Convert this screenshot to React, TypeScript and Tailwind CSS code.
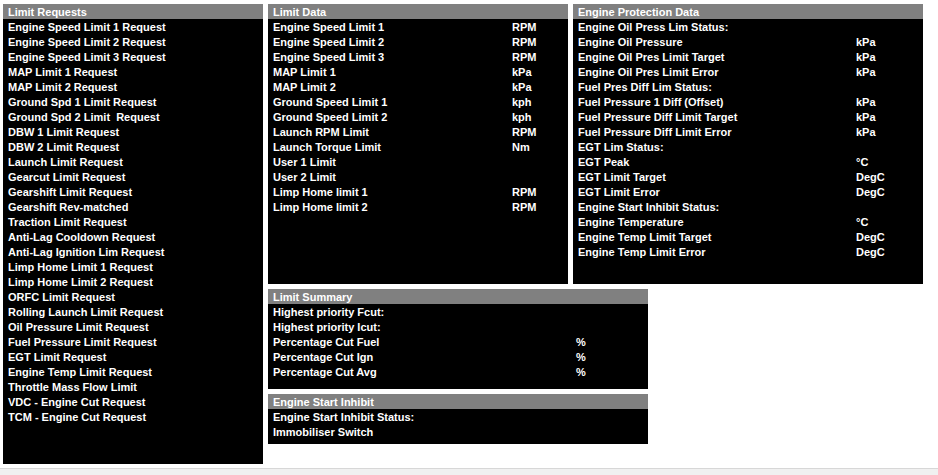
import React from "react";

type Row = [string, string?];

const limitRequests: Row[] = [
  ["Engine Speed Limit 1 Request"],
  ["Engine Speed Limit 2 Request"],
  ["Engine Speed Limit 3 Request"],
  ["MAP Limit 1 Request"],
  ["MAP Limit 2 Request"],
  ["Ground Spd 1 Limit Request"],
  ["Ground Spd 2 Limit  Request"],
  ["DBW 1 Limit Request"],
  ["DBW 2 Limit Request"],
  ["Launch Limit Request"],
  ["Gearcut Limit Request"],
  ["Gearshift Limit Request"],
  ["Gearshift Rev-matched"],
  ["Traction Limit Request"],
  ["Anti-Lag Cooldown Request"],
  ["Anti-Lag Ignition Lim Request"],
  ["Limp Home Limit 1 Request"],
  ["Limp Home Limit 2 Request"],
  ["ORFC Limit Request"],
  ["Rolling Launch Limit Request"],
  ["Oil Pressure Limit Request"],
  ["Fuel Pressure Limit Request"],
  ["EGT Limit Request"],
  ["Engine Temp Limit Request"],
  ["Throttle Mass Flow Limit"],
  ["VDC - Engine Cut Request"],
  ["TCM - Engine Cut Request"],
];

const limitData: Row[] = [
  ["Engine Speed Limit 1", "RPM"],
  ["Engine Speed Limit 2", "RPM"],
  ["Engine Speed Limit 3", "RPM"],
  ["MAP Limit 1", "kPa"],
  ["MAP Limit 2", "kPa"],
  ["Ground Speed Limit 1", "kph"],
  ["Ground Speed Limit 2", "kph"],
  ["Launch RPM Limit", "RPM"],
  ["Launch Torque Limit", "Nm"],
  ["User 1 Limit"],
  ["User 2 Limit"],
  ["Limp Home limit 1", "RPM"],
  ["Limp Home limit 2", "RPM"],
];

const protection: Row[] = [
  ["Engine Oil Press Lim Status:"],
  ["Engine Oil Pressure", "kPa"],
  ["Engine Oil Pres Limit Target", "kPa"],
  ["Engine Oil Pres Limit Error", "kPa"],
  ["Fuel Pres Diff Lim Status:"],
  ["Fuel Pressure 1 Diff (Offset)", "kPa"],
  ["Fuel Pressure Diff Limit Target", "kPa"],
  ["Fuel Pressure Diff Limit Error", "kPa"],
  ["EGT Lim Status:"],
  ["EGT Peak", "°C"],
  ["EGT Limit Target", "DegC"],
  ["EGT Limit Error", "DegC"],
  ["Engine Start Inhibit Status:"],
  ["Engine Temperature", "°C"],
  ["Engine Temp Limit Target", "DegC"],
  ["Engine Temp Limit Error", "DegC"],
];

const summary: Row[] = [
  ["Highest priority Fcut:"],
  ["Highest priority Icut:"],
  ["Percentage Cut Fuel", "%"],
  ["Percentage Cut Ign", "%"],
  ["Percentage Cut Avg", "%"],
];

const inhibit: Row[] = [["Engine Start Inhibit Status:"], ["Immobiliser Switch"]];

const Panel = ({
  title,
  rows,
  className,
  unitCol,
}: {
  title: string;
  rows: Row[];
  className: string;
  unitCol?: string;
}) => {
  return (
    <div className={`flex flex-col bg-black ${className}`}>
      <div className="h-[15px] bg-[#808080] pl-[5px] pt-px leading-[14px] text-white">{title}</div>
      {rows.map((r, i) => (
        <div key={i} className="flex h-[15px] pl-[5px] pt-px leading-[14px] text-white whitespace-pre">
          <div className={unitCol}>{r[0]}</div>
          {r[1] && <div>{r[1]}</div>}
        </div>
      ))}
    </div>
  );
};

export default function App() {
  return (
    <div
      className="w-[938px] h-[475px] bg-white flex flex-col overflow-hidden text-[11px] font-bold"
      style={{ fontFamily: '"Liberation Sans", Arial, sans-serif' }}
    >
      <div className="flex gap-[5px] pl-[3px] pt-[4px] h-[468px]">
        <Panel title="Limit Requests" rows={limitRequests} className="w-[260px] h-[460px]" />
        <div className="flex flex-col gap-[5px]">
          <div className="flex gap-[5px]">
            <Panel title="Limit Data" rows={limitData} className="w-[300px] h-[280px]" unitCol="w-[239px]" />
            <Panel title="Engine Protection Data" rows={protection} className="w-[350px] h-[280px]" unitCol="w-[278px]" />
          </div>
          <Panel title="Limit Summary" rows={summary} className="w-[380px] h-[100px]" unitCol="w-[303px]" />
          <Panel title="Engine Start Inhibit" rows={inhibit} className="w-[380px] h-[50px]" />
        </div>
      </div>
      <div className="flex-1 border-t border-[#d7d7d7] bg-[#f0f0f0]" />
    </div>
  );
}
